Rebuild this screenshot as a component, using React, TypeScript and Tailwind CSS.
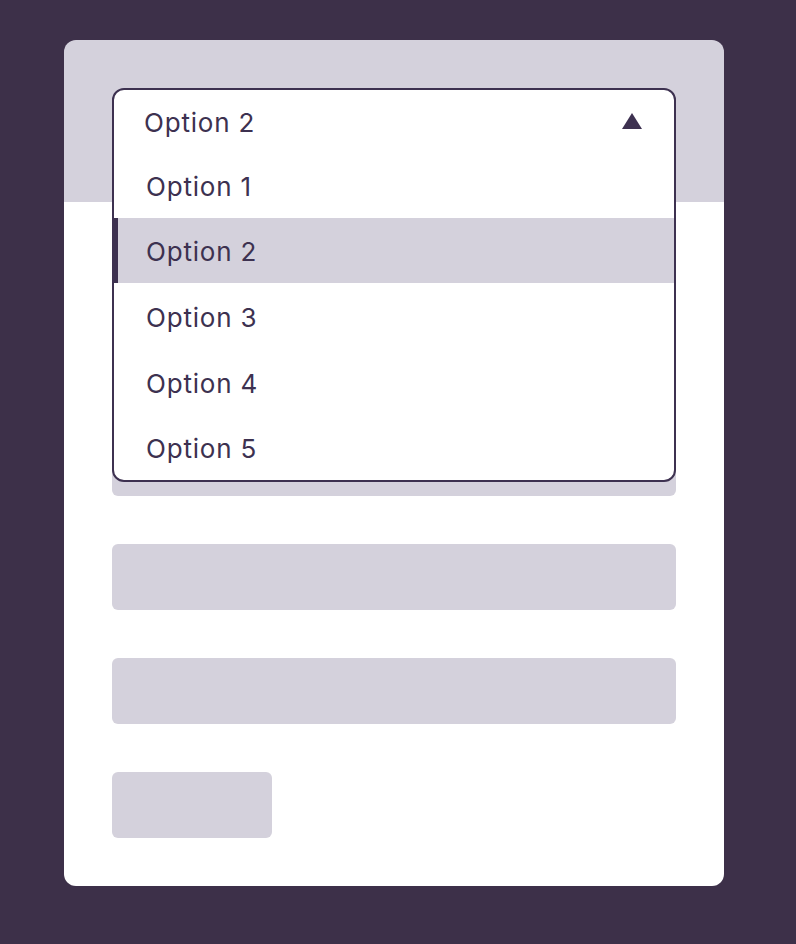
import React from "react";

const options = ["Option 1", "Option 2", "Option 3", "Option 4", "Option 5"];

export default function App() {
  const selected = "Option 2";
  return (
    <div
      className="min-h-screen bg-[#3d3049] pl-16 pr-[72px] pt-10 pb-[58px]"
      style={{ fontFamily: "Inter, 'Noto Sans', sans-serif" }}
    >
      <div className="rounded-xl bg-[linear-gradient(to_bottom,#d4d1dc_162px,#ffffff_162px)] p-12">
        <div className="relative flex flex-col gap-12">
          <div className="h-[66px]" />
          <div className="h-[66px] rounded-md bg-[#d4d1dc]" />
          <div className="h-[66px] rounded-md bg-[#d4d1dc]" />
          <div className="h-[66px] rounded-md bg-[#d4d1dc]" />
          <div className="h-[66px] rounded-md bg-[#d4d1dc]" />
          <div className="h-[66px] rounded-md bg-[#d4d1dc]" />
          <div className="h-[66px] w-40 rounded-md bg-[#d4d1dc]" />

          <div className="absolute inset-x-0 top-0 overflow-hidden rounded-xl border-2 border-[#3d3150] bg-white text-[26px] tracking-[0.8px] text-[#3d3150]">
            <div className="flex h-[62px] items-center justify-between pl-[30px] pr-[32px] pt-[2px]">
              <span>{selected}</span>
              <svg width="20" height="16" viewBox="0 0 20 16" className="-mt-[2px]">
                <polygon points="10,0 20,16 0,16" fill="#3d3150" />
              </svg>
            </div>
            {options.map((o) => (
              <div
                key={o}
                className={
                  o === selected
                    ? "flex h-[65.6px] items-center border-l-4 border-[#3d3150] bg-[#d4d1dc] pl-7 pt-[3px]"
                    : "flex h-[65.6px] items-center border-l-4 border-transparent pl-7 pt-[3px]"
                }
              >
                {o}
              </div>
            ))}
          </div>
        </div>
      </div>
    </div>
  );
}
